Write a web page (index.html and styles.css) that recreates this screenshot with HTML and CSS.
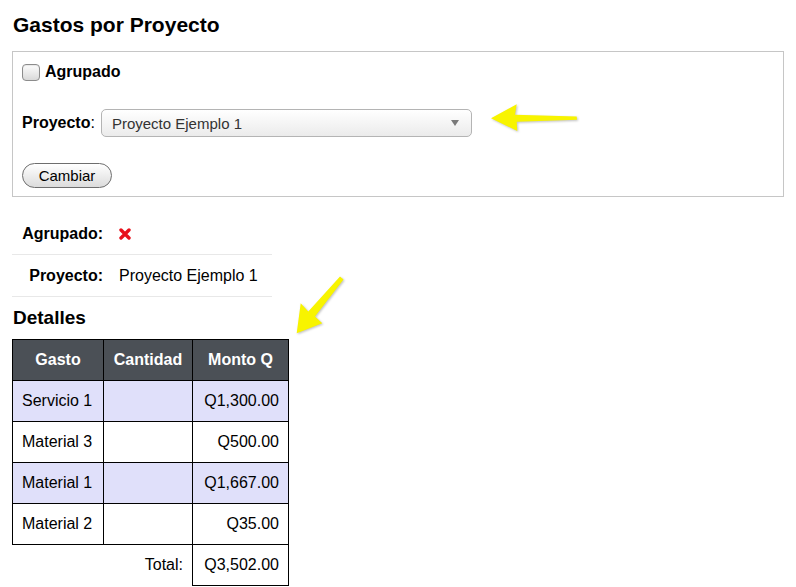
FILE: index.html
```html
<!DOCTYPE html>
<html>
<head>
<meta charset="utf-8">
<title>Gastos por Proyecto</title>
<link rel="stylesheet" href="styles.css">
</head>
<body>
<h1 class="title">Gastos por Proyecto</h1>
<form class="filter">
  <div class="row row-check">
    <span class="checkbox"></span><label class="check-label">Agrupado</label>
  </div>
  <div class="row row-select">
    <label class="field-label"><b>Proyecto</b>:</label>
    <div class="select">
      <span>Proyecto Ejemplo 1</span>
      <svg class="caret" width="8" height="6" viewBox="0 0 8 6"><polygon points="0,0 8,0 4,6" fill="#7a7a7a"/></svg>
    </div>
  </div>
  <div class="row row-button">
    <button class="btn" type="button">Cambiar</button>
  </div>
</form>

<table class="summary">
  <tr>
    <th>Agrupado:</th>
    <td><svg class="xmark" width="12" height="12" viewBox="0 0 12 12"><path d="M2 2 L10 10 M10 2 L2 10" stroke="#e8101a" stroke-width="3.4" stroke-linecap="round"/></svg></td>
  </tr>
  <tr>
    <th>Proyecto:</th>
    <td>Proyecto Ejemplo 1</td>
  </tr>
</table>

<h3 class="section">Detalles</h3>

<table class="details">
  <colgroup><col class="c1"><col class="c2"><col class="c3"></colgroup>
  <thead>
    <tr><th>Gasto</th><th>Cantidad</th><th>Monto Q</th></tr>
  </thead>
  <tbody>
    <tr class="alt"><td>Servicio 1</td><td></td><td class="num">Q1,300.00</td></tr>
    <tr><td>Material 3</td><td></td><td class="num">Q500.00</td></tr>
    <tr class="alt"><td>Material 1</td><td></td><td class="num">Q1,667.00</td></tr>
    <tr><td>Material 2</td><td></td><td class="num">Q35.00</td></tr>
    <tr class="total-row"><td class="total-label" colspan="2">Total:</td><td class="num total">Q3,502.00</td></tr>
  </tbody>
</table>

<svg class="annot" width="796" height="587" viewBox="0 0 796 587">
  <polygon class="yarrow" points="491,118.3 516.7,104.3 515,114.8 576.7,116.5 577,119.8 516.7,121.8 517.3,131"/>
  <polygon class="yarrow" points="296.7,333.3 300.7,303.3 308.3,311.5 340,276.5 343.5,279.5 315,316.5 322.3,323.3"/>
</svg>
</body>
</html>
```

FILE: styles.css
```css
html, body {
  margin: 0;
}
body {
  padding: 0 12px;
  font-family: "Liberation Sans", Arial, Helvetica, sans-serif;
  color: #000;
  background: #fff;
  position: relative;
  height: 587px;
  overflow: hidden;
}
.title {
  margin: 0 0 14px 0;
  padding: 13px 0 0 1px;
  font-size: 21px;
  line-height: 24px;
  font-weight: bold;
}
.filter {
  margin: 0;
  border: 1px solid #c6c6c6;
  padding: 11px 9px 8px;
}
.row {
  display: flex;
  align-items: center;
}
.row-check {
  height: 18px;
}
.checkbox {
  width: 16px;
  height: 15px;
  border: 1px solid #8c8c8c;
  border-radius: 4px;
  background: linear-gradient(#fdfdfd, #d9d9d9);
  box-shadow: inset 0 1px 1px rgba(0,0,0,0.08);
}
.check-label {
  margin-left: 5px;
  font-weight: bold;
  font-size: 16px;
}
.row-select {
  margin-top: 28px;
  height: 28px;
}
.field-label {
  font-size: 16px;
  margin-right: 6px;
}
.select {
  width: 371px;
  height: 28px;
  box-sizing: border-box;
  border: 1px solid #b4b4b4;
  border-radius: 5px;
  background: linear-gradient(#ffffff, #ebebeb);
  display: flex;
  align-items: center;
  justify-content: space-between;
  padding: 0 12px 0 10px;
  font-size: 15px;
  color: #333;
}
.caret {
  display: block;
}
.row-button {
  margin-top: 26px;
  height: 25px;
}
.btn {
  width: 90px;
  height: 25px;
  border: 1px solid #6e6e6e;
  border-radius: 13px;
  background: linear-gradient(#ffffff, #dcdcdc);
  font: 15px "Liberation Sans", Arial, sans-serif;
  color: #000;
  padding: 0;
}

.summary {
  margin-top: 16px;
  border-collapse: collapse;
  width: 260px;
  font-size: 16px;
}
.summary th, .summary td {
  height: 41px;
  padding: 0;
  border-bottom: 1px solid #e8e8e8;
}
.summary th {
  text-align: right;
  font-weight: bold;
  padding: 0 8px 0 10px;
  width: 81px;
  white-space: nowrap;
}
.summary td {
  padding: 0 8px;
  text-align: left;
}
.xmark {
  display: block;
}

.section {
  margin: 10px 0 10px 0;
  padding-left: 1px;
  font-size: 19px;
  line-height: 22px;
  font-weight: bold;
}

.details {
  border-collapse: collapse;
  table-layout: fixed;
  width: 277px;
  font-size: 16px;
}
.c1 { width: 91px; }
.c2 { width: 89px; }
.c3 { width: 96px; }
.details th, .details td {
  height: 40px;
  padding: 0 9px;
  border: 1px solid #000;
  white-space: nowrap;
}
.details th {
  background: #4b5056;
  color: #fff;
  font-weight: bold;
  text-align: center;
}
.details td {
  text-align: left;
}
.details tr.alt td {
  background: #e0e0fa;
}
.details td.num {
  text-align: right;
}
.details td.total-label {
  border: none;
  text-align: right;
}
.details td.total {
  border: 1px solid #000;
}

.annot {
  position: absolute;
  left: 0;
  top: 0;
  pointer-events: none;
}
.yarrow {
  fill: #f8f400;
  filter: drop-shadow(1px 1px 1px rgba(0,0,0,0.25));
}
```
